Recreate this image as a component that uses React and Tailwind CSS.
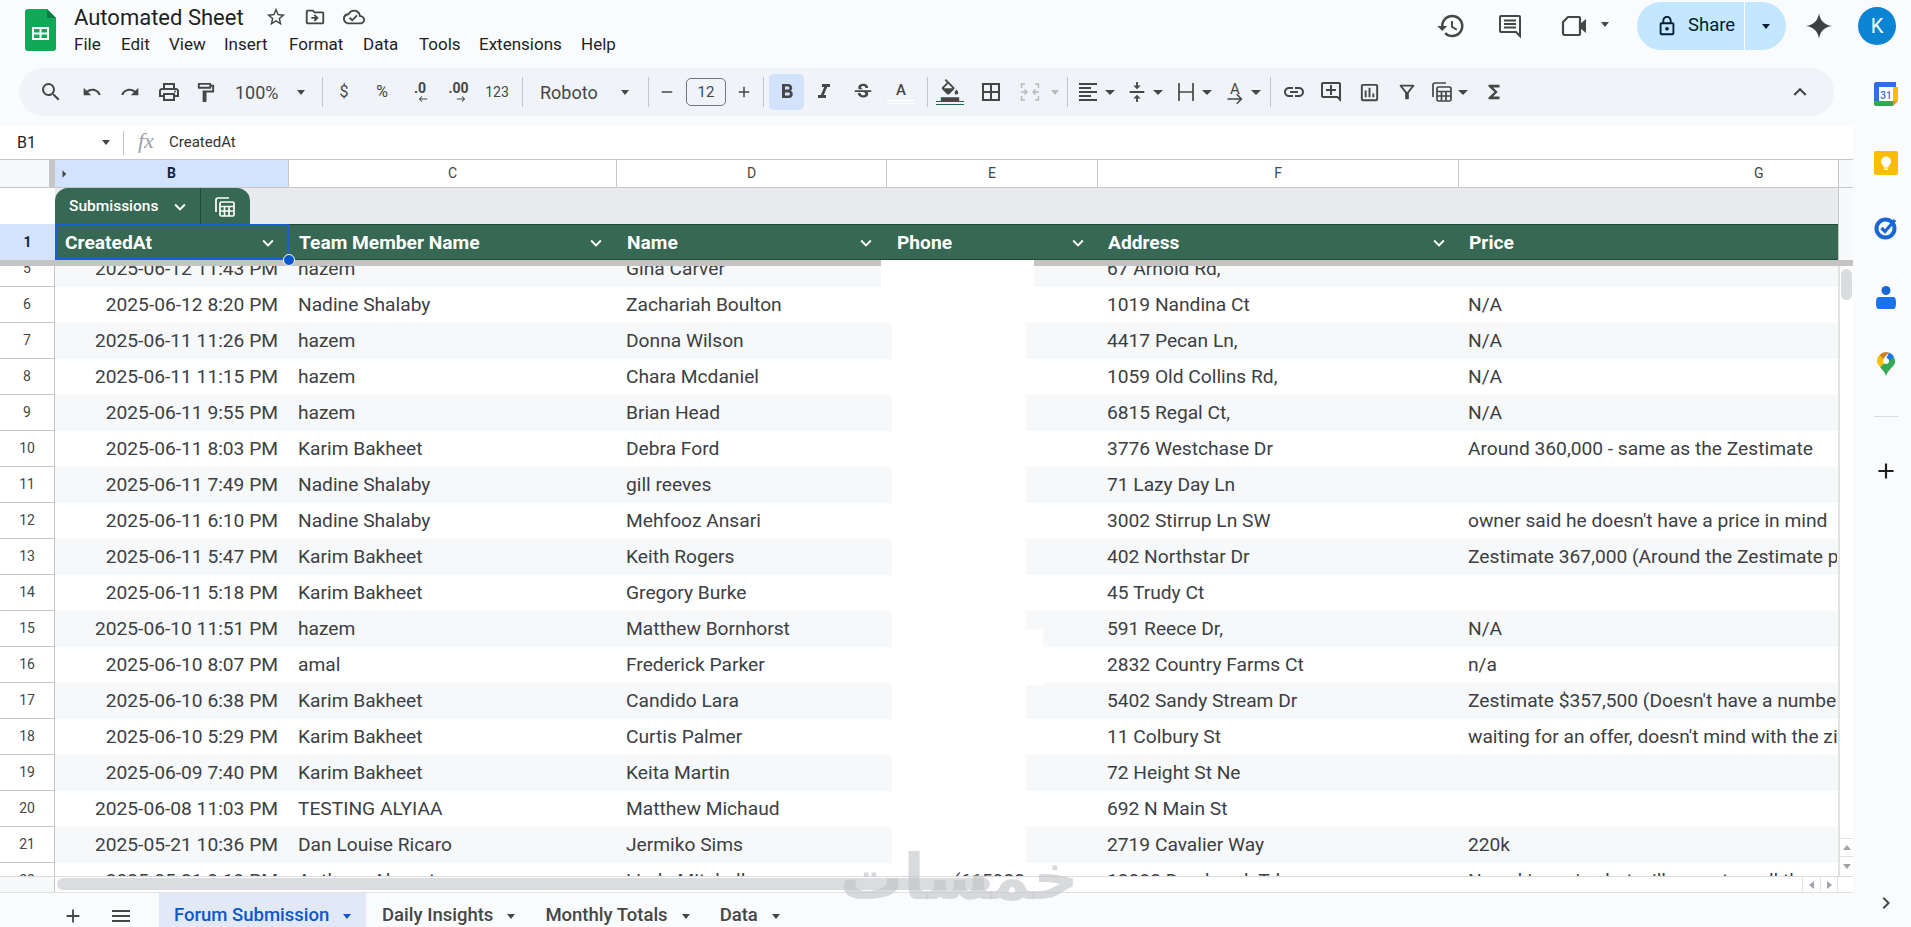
import {
  MdSearch, MdUndo, MdRedo, MdOutlinePrint, MdOutlineFormatPaint, MdRemove, MdAdd, MdFormatBold, MdFormatItalic,
  MdStrikethroughS, MdOutlineFormatColorFill, MdBorderAll, MdFormatAlignLeft, MdVerticalAlignCenter, MdInsertLink,
  MdOutlineAddComment, MdOutlineInsertChart, MdOutlineFilterAlt, MdFunctions, MdExpandLess, MdExpandMore, MdMenu,
  MdChevronRight, MdHistory, MdOutlineLock, MdStarBorder, MdOutlineDriveFileMove, MdOutlineCloudDone,
  MdArrowRight, MdWest, MdEast,
} from "react-icons/md";

const rows = [
  ["5", "2025-06-12 11:43 PM", "hazem", "Gina Carver", "", "67 Arnold Rd,", ""],
  ["6", "2025-06-12 8:20 PM", "Nadine Shalaby", "Zachariah Boulton", "", "1019 Nandina Ct", "N/A"],
  ["7", "2025-06-11 11:26 PM", "hazem", "Donna Wilson", "", "4417 Pecan Ln,", "N/A"],
  ["8", "2025-06-11 11:15 PM", "hazem", "Chara Mcdaniel", "", "1059 Old Collins Rd,", "N/A"],
  ["9", "2025-06-11 9:55 PM", "hazem", "Brian Head", "", "6815 Regal Ct,", "N/A"],
  ["10", "2025-06-11 8:03 PM", "Karim Bakheet", "Debra Ford", "", "3776 Westchase Dr", "Around 360,000 - same as the Zestimate"],
  ["11", "2025-06-11 7:49 PM", "Nadine Shalaby", "gill reeves", "", "71 Lazy Day Ln", ""],
  ["12", "2025-06-11 6:10 PM", "Nadine Shalaby", "Mehfooz Ansari", "", "3002 Stirrup Ln SW", "owner said he doesn't have a price in mind"],
  ["13", "2025-06-11 5:47 PM", "Karim Bakheet", "Keith Rogers", "", "402 Northstar Dr", "Zestimate 367,000 (Around the Zestimate price)"],
  ["14", "2025-06-11 5:18 PM", "Karim Bakheet", "Gregory Burke", "", "45 Trudy Ct", ""],
  ["15", "2025-06-10 11:51 PM", "hazem", "Matthew Bornhorst", "", "591 Reece Dr,", "N/A"],
  ["16", "2025-06-10 8:07 PM", "amal", "Frederick Parker", "", "2832 Country Farms Ct", "n/a"],
  ["17", "2025-06-10 6:38 PM", "Karim Bakheet", "Candido Lara", "", "5402 Sandy Stream Dr", "Zestimate $357,500 (Doesn't have a number in mind)"],
  ["18", "2025-06-10 5:29 PM", "Karim Bakheet", "Curtis Palmer", "", "11 Colbury St", "waiting for an offer, doesn't mind with the zip code"],
  ["19", "2025-06-09 7:40 PM", "Karim Bakheet", "Keita Martin", "", "72 Height St Ne", ""],
  ["20", "2025-06-08 11:03 PM", "TESTING ALYIAA", "Matthew Michaud", "", "692 N Main St", ""],
  ["21", "2025-05-21 10:36 PM", "Dan Louise Ricaro", "Jermiko Sims", "", "2719 Cavalier Way", "220k"],
  ["22", "2025-05-21 9:19 PM", "Anthony Almonte", "Linda Mitchell", "(665922", "12882 Deerbrook Trl", "No asking price but will accept a call tho"],
];

const Sep = ({ className = "" }) => <div className={"w-px h-[30px] bg-[#c7c7c7] shrink-0 " + className} />;

const Cell = ({ className = "", children }) => (
  <div className={"h-[36px] flex items-center justify-center shrink-0 text-[#444746] " + className}>{children}</div>
);

const Caret = ({ className = "" }) => (
  <div className={"w-[12px] flex justify-center shrink-0 " + className}>
    <div className="w-0 h-0 border-x-[5px] border-x-transparent border-t-[5px] border-t-[#444746]" />
  </div>
);

const DropCaret = ({ color = "border-t-[#444746]" }) => (
  <div className={"w-0 h-0 border-x-[4px] border-x-transparent border-t-[5px] " + color} />
);

const SheetsLogo = () => (
  <svg width="31" height="42" viewBox="0 0 31 42">
    <path d="M3 0h19l9 9v30a3 3 0 0 1-3 3H3a3 3 0 0 1-3-3V3a3 3 0 0 1 3-3z" fill="#0fa958" />
    <path d="M22 0l9 9h-9z" fill="#0b7d42" />
    <path d="M7 18h17v13H7z" fill="#fff" />
    <path d="M9 20h5.500v3.500H9zM16.500 20H22v3.500h-5.500zM9 25.500h5.500V29H9zM16.500 25.500H22V29h-5.500z" fill="#0fa958" />
  </svg>
);

const CalcIcon = ({ color = "#444746", size = 22 }) => (
  <svg width={size} height={size} viewBox="0 0 22 22" fill="none" stroke={color} strokeWidth="1.700">
    <path d="M2 16V4a2 2 0 0 1 2-2h11" />
    <rect x="6" y="6" width="14" height="14" rx="1.500" />
    <path d="M6 10.500h14M10.500 10.500V20M15 10.500V20M6 15h14" />
  </svg>
);

const CommentIcon = () => (
  <svg width="26" height="26" viewBox="0 0 26 26" fill="none" stroke="#444746" strokeWidth="2">
    <path d="M4 3h18a1 1 0 0 1 1 1v19l-4-4H4a1 1 0 0 1-1-1V4a1 1 0 0 1 1-1z" />
    <path d="M7 7.500h12M7 11h12M7 14.500h12" />
  </svg>
);

const MeetIcon = () => (
  <svg width="26" height="24" viewBox="0 0 26 24" fill="none">
    <path d="M7 3h11a1 1 0 0 1 1 1v16a1 1 0 0 1-1 1H4a2 2 0 0 1-2-2V8z" stroke="#444746" strokeWidth="2.200" strokeLinejoin="round" />
    <path d="M19 10l6-5v14l-6-5z" fill="#444746" />
  </svg>
);

const MergeIcon = () => (
  <svg width="20" height="20" viewBox="0 0 20 20" fill="none" stroke="#b8bbbb" strokeWidth="1.500">
    <path d="M5 2H1.500v4M1.500 14v4H5M15 2h3.500v4M18.500 14v4H15M1 10h6M4.500 7.500 7 10l-2.500 2.500M19 10h-6M15.500 7.500 13 10l2.500 2.500" />
  </svg>
);

const WrapIcon = () => (
  <svg width="18" height="20" viewBox="0 0 18 20" fill="none" stroke="#444746" strokeWidth="1.700">
    <path d="M2 1v18M16 1v18M2 10h14" />
  </svg>
);

const Gemini = () => (
  <svg width="26" height="26" viewBox="0 0 26 26">
    <path d="M13 0c.8 7 5 12 13 13-8 1-12.200 6-13 13-.8-7-5-12-13-13 8-1 12.200-6 13-13z" fill="#3c4043" />
  </svg>
);

const CalendarApp = () => (
  <svg width="24" height="24" viewBox="0 0 24 24">
    <path d="M0 2a2 2 0 0 1 2-2h20v5H5v14H0z" fill="#2f6fe4" />
    <path d="M19 5h5v14h-5z" fill="#fbbc04" />
    <path d="M0 19h19v5H2a2 2 0 0 1-2-2z" fill="#34a853" />
    <path d="M19 19h5l-5 5z" fill="#ea8c3a" />
    <rect x="5" y="5" width="14" height="14" fill="#fff" />
    <text x="12" y="16.500" fontSize="10" fontFamily="Roboto, sans-serif" fontWeight="500" fill="#2f6fe4" textAnchor="middle">31</text>
  </svg>
);

const KeepApp = () => (
  <svg width="24" height="24" viewBox="0 0 24 24">
    <rect width="24" height="24" rx="2" fill="#fbbc04" />
    <circle cx="12" cy="10.500" r="5" fill="#fff" />
    <rect x="9.500" y="14.500" width="5" height="2" fill="#fff" />
    <rect x="10" y="17.500" width="4" height="1.500" fill="#fff" />
  </svg>
);

const TasksApp = () => (
  <svg width="24" height="24" viewBox="0 0 24 24" fill="none">
    <circle cx="11.500" cy="12.500" r="9" stroke="#1967d2" strokeWidth="4" />
    <path d="M7.500 12l3.500 3.500L21 4" stroke="#1967d2" strokeWidth="3.200" />
  </svg>
);

const ContactsApp = () => (
  <svg width="24" height="26" viewBox="0 0 24 26">
    <circle cx="12" cy="5.500" r="4.500" fill="#1967d2" />
    <path d="M5 12h14c2 0 3 1.500 3 6s-1 6-3 6H5c-2 0-3-1.500-3-6s1-6 3-6z" fill="#1a73e8" />
  </svg>
);

const MapsApp = () => (
  <svg width="18" height="24" viewBox="0 0 18 24">
    <path d="M9 24C8 20 5 17.500 3 15L9 9l9 0c0 2-1 4-3 6-2 2.500-5 5-6 9z" fill="#34a853" />
    <path d="M3 15C1 12.500 0 11 0 9c0-2.500 1-4.500 2.600-6L9 9z" fill="#fbbc04" />
    <path d="M2.600 3A9 9 0 0 1 9 0c1 0 2 .2 3 .6L6 7z" fill="#c9812f" />
    <path d="M12 .6A9 9 0 0 1 17 5l-5 5-3-3z" fill="#1a73e8" />
    <path d="M17 5c.7 1.200 1 2.600 1 4 0 2-1 4-3 6L8 12z" fill="#34a853" />
    <circle cx="9" cy="9" r="3" fill="#fff" />
  </svg>
);

const Toolbar = () => (
  <div className="h-[48px] ml-[19px] w-[1815px] rounded-full bg-[#f0f4f9] flex items-center pl-[13px] pr-[19px]">
    <Cell className="w-[38px]"><MdSearch size={24} /></Cell>
    <Cell className="w-[44px]"><MdUndo size={20} /></Cell>
    <Cell className="w-[32px]"><MdRedo size={20} /></Cell>
    <Cell className="w-[46px]"><MdOutlinePrint size={24} /></Cell>
    <Cell className="w-[26px]"><MdOutlineFormatPaint size={23} /></Cell>
    <div className="w-[94px] shrink-0 flex items-center justify-between pl-[17px] pr-[7px] text-[18px] text-[#444746]">100%<DropCaret /></div>
    <Sep className="mx-[10px]" />
    <Cell className="w-[22px] text-[16px]">$</Cell>
    <Cell className="w-[54px] text-[16px]">%</Cell>
    <Cell className="w-[22px] relative font-bold text-[14px] pb-[7px]">.0<MdWest size={10} className="absolute bottom-[6px] left-[9px]" /></Cell>
    <Cell className="w-[55px] relative font-bold text-[14px] pb-[7px]">.00<MdEast size={10} className="absolute bottom-[6px] left-[25px]" /></Cell>
    <Cell className="w-[22px] text-[14px]">123</Cell>
    <Sep className="mx-[14px]" />
    <div className="w-[97px] shrink-0 flex items-center justify-between pl-[3px] pr-[5px] text-[18px] text-[#444746]">Roboto<DropCaret /></div>
    <Sep className="ml-[14px] mr-[9px]" />
    <Cell className="w-[18px]"><MdRemove size={20} /></Cell>
    <div className="ml-[10px] w-[40px] h-[28px] rounded-[5px] border border-[#747775] flex items-center justify-center text-[15px] text-[#444746]">12</div>
    <Cell className="w-[18px] ml-[9px]"><MdAdd size={22} /></Cell>
    <Sep className="ml-[10px]" />
    <Cell className="w-[35px] ml-[5px] rounded-[5px] bg-[#d3e3fd] text-[#0b1f3f]"><MdFormatBold size={24} /></Cell>
    <Cell className="w-[40px]"><MdFormatItalic size={24} /></Cell>
    <Cell className="w-[38px]"><MdStrikethroughS size={22} /></Cell>
    <Cell className="w-[38px] flex-col">
      <span className="text-[15px] leading-[20px] font-medium">A</span>
      <div className="w-[28px] h-[4px] border-y border-white" />
    </Cell>
    <Sep className="ml-[7px]" />
    <Cell className="w-[44px] flex-col">
      <MdOutlineFormatColorFill size={22} />
      <div className="w-[28px] h-[4px] border-y border-[#1c6a4c]" />
    </Cell>
    <Cell className="w-[37px]"><MdBorderAll size={24} /></Cell>
    <Cell className="w-[42px]"><MergeIcon /></Cell>
    <div className="w-[8px] flex justify-center"><DropCaret color="border-t-[#b8bbbb]" /></div>
    <Sep className="ml-[8px]" />
    <Cell className="w-[30px] ml-[5px]"><MdFormatAlignLeft size={24} /></Cell>
    <Caret className="ml-px" />
    <Cell className="w-[30px] ml-[6px]"><MdVerticalAlignCenter size={22} /></Cell>
    <Caret />
    <Cell className="w-[30px] ml-[7px]"><WrapIcon /></Cell>
    <Caret />
    <Cell className="w-[30px] ml-[7px] relative text-[15px] pb-[6px]">A<MdEast size={18} className="absolute bottom-[2px] left-[6px]" /></Cell>
    <Caret />
    <Sep className="ml-[8px]" />
    <Cell className="w-[30px] ml-[8px]"><MdInsertLink size={24} /></Cell>
    <Cell className="w-[30px] ml-[7px]"><MdOutlineAddComment size={24} /></Cell>
    <Cell className="w-[30px] ml-[8px]"><MdOutlineInsertChart size={23} /></Cell>
    <Cell className="w-[30px] ml-[8px]"><MdOutlineFilterAlt size={22} /></Cell>
    <Cell className="w-[30px] ml-[5px]"><CalcIcon /></Cell>
    <Caret />
    <Cell className="w-[30px] ml-[10px]"><MdFunctions size={22} /></Cell>
    <Cell className="w-[30px] ml-auto"><MdExpandLess size={26} /></Cell>
  </div>
);

const Header = () => (
  <div className="h-[68px] flex">
    <div className="ml-[25px] mt-[9px]"><SheetsLogo /></div>
    <div className="ml-[18px] mt-[2px]">
      <div className="flex items-center h-[30px] text-[#1f1f1f]">
        <span className="text-[22px]">Automated Sheet</span>
        <MdStarBorder size={22} className="ml-[21px] text-[#444746]" />
        <MdOutlineDriveFileMove size={22} className="ml-[17px] text-[#444746]" />
        <MdOutlineCloudDone size={22} className="ml-[17px] text-[#444746]" />
      </div>
      <div className="flex -mt-px text-[17px] text-[#1f1f1f] leading-[26px]">
        <span className="w-[47px]">File</span>
        <span className="w-[48px]">Edit</span>
        <span className="w-[55px]">View</span>
        <span className="w-[65px]">Insert</span>
        <span className="w-[74px]">Format</span>
        <span className="w-[56px]">Data</span>
        <span className="w-[60px]">Tools</span>
        <span className="w-[102px]">Extensions</span>
        <span>Help</span>
      </div>
    </div>
    <div className="ml-auto flex items-start pr-[15px] text-[#444746]">
      <MdHistory size={30} className="mt-[11px]" />
      <div className="ml-[31px] mt-[13px]"><CommentIcon /></div>
      <div className="ml-[38px] mt-[14px]"><MeetIcon /></div>
      <div className="ml-[14px] mt-[22px]"><DropCaret /></div>
      <div className="ml-[28px] mt-[2px] w-[149px] h-[48px] rounded-full bg-[#c2e7ff] flex items-center text-[#001d35]">
        <div className="w-[108px] h-full flex items-center border-r border-white pl-[19px]">
          <MdOutlineLock size={22} />
          <span className="ml-[10px] text-[18.5px]">Share</span>
        </div>
        <div className="flex-1 flex justify-center"><DropCaret color="border-t-[#001d35]" /></div>
      </div>
      <div className="ml-[20px] mt-[13px]"><Gemini /></div>
      <div className="ml-[26px] mt-[7px] w-[38px] h-[38px] rounded-full bg-[#0b84d4] text-white flex items-center justify-center text-[20px]">K</div>
    </div>
  </div>
);

const FormulaBar = () => (
  <div className="mt-[10px] h-[33px] bg-white flex items-center">
    <span className="ml-[17px] w-[85px] text-[16px] text-[#1f1f1f]">B1</span>
    <DropCaret />
    <div className="ml-[13px] w-px h-[24px] bg-[#c7c7c7]" />
    <span className="ml-[14px] w-[30px] pb-[3px] text-[22px] leading-[28px] italic text-[#9aa0a6] font-['Liberation_Serif',serif]">fx</span>
    <span className="ml-px text-[15px] text-[#333]">CreatedAt</span>
  </div>
);

const ColumnHeaders = () => (
  <div className="h-[29px] flex border-y border-[#c4c7c5] text-[14px] text-[#444746]">
    <div className="w-[55px] bg-[#f8f9fa] flex justify-end shrink-0">
      <div className="w-[6px] bg-[#c4c7c5]" />
    </div>
    <div className="w-[233px] bg-[#d3e3fd] font-bold text-[#0b1f3f] flex items-center justify-center relative">
      <MdArrowRight size={18} className="absolute left-0 text-[#444746]" />
      B
    </div>
    <div className="w-[328px] bg-white flex items-center justify-center border-l border-[#c4c7c5]">C</div>
    <div className="w-[270px] bg-white flex items-center justify-center border-l border-[#c4c7c5]">D</div>
    <div className="w-[211px] bg-white flex items-center justify-center border-l border-[#c4c7c5]">E</div>
    <div className="w-[361px] bg-white flex items-center justify-center border-l border-[#c4c7c5]">F</div>
    <div className="w-[380px] bg-white flex items-center pl-[295px] border-l border-[#c4c7c5]">G</div>
    <div className="flex-1 bg-[#f8f9fa] border-l border-[#c4c7c5]" />
  </div>
);

const TableTabRow = () => (
  <div className="h-[36px] flex">
    <div className="w-[55px] bg-white shrink-0" />
    <div className="w-[1783px] bg-[#e8eaed] flex">
      <div className="w-[195px] rounded-t-[13px] bg-[#366853] text-white flex items-center">
        <span className="ml-[14px] pt-[2px] text-[15.5px] font-medium">Submissions</span>
        <MdExpandMore size={22} className="ml-[11px] mt-[2px]" />
        <div className="ml-[9px] w-px h-full bg-[#21493a]" />
        <div className="ml-[13px] mt-[2px]"><CalcIcon color="#fff" /></div>
      </div>
    </div>
    <div className="flex-1 bg-[#f8f9fa] border-l border-[#c4c7c5]" />
  </div>
);

const headCls = "flex items-center justify-between bg-[#366853] text-white text-[19.2px] font-bold pt-[2px] ";
const headEdge = "pl-[10px] border-y border-[#1f4a38] ";

const HeaderRow = () => (
  <div className="h-[36px] flex relative">
    <div className="w-[55px] bg-[#d3e3fd] flex items-center justify-center text-[14px] font-bold text-[#0b1f3f] shrink-0">1</div>
    <div className={headCls + "w-[234px] pl-[8px] pr-[8px] border-2 border-[#1a5fd8]"}>CreatedAt<MdExpandMore size={22} /></div>
    <div className={headCls + headEdge + "w-[328px] pr-[10px]"}>Team Member Name<MdExpandMore size={22} /></div>
    <div className={headCls + headEdge + "w-[270px] pr-[10px]"}>Name<MdExpandMore size={22} /></div>
    <div className={headCls + headEdge + "w-[211px] pr-[9px]"}>Phone<MdExpandMore size={22} /></div>
    <div className={headCls + headEdge + "w-[361px] pr-[9px]"}>Address<MdExpandMore size={22} /></div>
    <div className={headCls + headEdge + "w-[379px]"}>Price</div>
    <div className="flex-1 bg-[#f8f9fa] border-l border-[#c4c7c5]" />
    <div className="absolute left-[283px] top-[30px] w-[12px] h-[12px] rounded-full bg-[#0b57d0] border border-white z-10" />
  </div>
);

const DataRows = () => (
  <div className="h-[610px] overflow-hidden flex relative">
    <div className="w-[1838px] -mt-[15px] shrink-0">
      {rows.map((r, i) => (
        <div key={r[0]} className={"h-[36px] flex text-[19.2px] text-[#3c4043] " + (i % 2 === 0 ? "bg-[#f6f8f9]" : "bg-white")}>
          <div className="w-[55px] bg-white border-r border-b border-[#c4c7c5] flex items-center justify-center text-[14px] text-[#444746] shrink-0">{r[0]}</div>
          <div className="w-[234px] flex items-center justify-end pt-[1px] pr-[10px] shrink-0 -ml-px">{r[1]}</div>
          <div className="w-[328px] flex items-center pt-[1px] pl-[10px] shrink-0">{r[2]}</div>
          <div className="w-[270px] flex items-center pt-[1px] pl-[10px] shrink-0">{r[3]}</div>
          <div className="w-[211px] flex items-center justify-end pt-[1px] pr-[72px] shrink-0">{r[4]}</div>
          <div className="w-[361px] flex items-center pt-[1px] pl-[10px] shrink-0">{r[5]}</div>
          <div className="w-[379px] flex items-center pt-[1px] pl-[10px] shrink-0 overflow-hidden whitespace-nowrap">{r[6]}</div>
        </div>
      ))}
    </div>
    <div className="flex-1 bg-white border-l-2 border-[#e1e3e1] flex flex-col items-center">
      <div className="w-[11px] h-[31px] mt-[3px] rounded-full bg-[#dadce0]" />
      <div className="mt-auto h-[38px] w-full flex flex-col text-[#9aa0a6]">
        <div className="h-[19px] border-y border-[#e1e3e1] flex items-center justify-center"><div className="w-0 h-0 border-x-[4px] border-x-transparent border-b-[5px] border-b-[#a0a4a8]" /></div>
        <div className="h-[19px] flex items-center justify-center"><DropCaret color="border-t-[#a0a4a8]" /></div>
      </div>
    </div>
    {/* redacted phone numbers */}
    <div className="absolute left-[892px] top-0 w-[134px] h-[597px] bg-white" />
    <div className="absolute left-[1026px] top-[363px] w-[17px] h-[56px] bg-white" />
  </div>
);

const HScroll = () => (
  <div className="h-[16px] flex bg-white border-t border-[#dadce0]">
    <div className="w-[55px] bg-[#f8f9fa] border-r border-[#c4c7c5]" />
    <div className="w-[1747px] pt-[1px] pl-[2px]">
      <div className="w-[933px] h-[12px] rounded-full bg-[#dadce0]" />
    </div>
    <div className="w-[18px] border-l border-[#e1e3e1] flex items-center justify-center">
      <div className="w-0 h-0 border-y-[4px] border-y-transparent border-r-[5px] border-r-[#a0a4a8]" />
    </div>
    <div className="w-[18px] border-x border-[#e1e3e1] flex items-center justify-center">
      <div className="w-0 h-0 border-y-[4px] border-y-transparent border-l-[5px] border-l-[#a0a4a8]" />
    </div>
  </div>
);

const SheetTabs = () => (
  <div className="h-[35px] flex items-stretch border-t border-[#e1e3e1] text-[#444746]">
    <div className="flex items-center pt-[12px]">
      <MdAdd size={22} className="ml-[62px]" />
      <MdMenu size={24} className="ml-[25px]" />
    </div>
    <div className="ml-[26px] w-[207px] bg-[#e1e9f7] flex items-center pt-[12px] pl-[15px] text-[#0b57d0] text-[18.5px] font-medium">
      Forum Submission
      <div className="ml-[14px]"><DropCaret color="border-t-[#0b57d0]" /></div>
    </div>
    <div className="flex items-center pt-[12px] text-[18.5px] font-medium">
      <span className="ml-[16px]">Daily Insights</span>
      <div className="ml-[14px]"><DropCaret /></div>
      <span className="ml-[30px]">Monthly Totals</span>
      <div className="ml-[14px]"><DropCaret /></div>
      <span className="ml-[30px]">Data</span>
      <div className="ml-[14px]"><DropCaret /></div>
    </div>
  </div>
);

const SidePanel = () => (
  <div className="w-[58px] flex flex-col items-center pt-[14px] pl-[8px] shrink-0">
    <CalendarApp />
    <div className="mt-[45px]"><KeepApp /></div>
    <div className="mt-[41px]"><TasksApp /></div>
    <div className="mt-[45px]"><ContactsApp /></div>
    <div className="mt-[41px]"><MapsApp /></div>
    <div className="mt-[40px] w-[24px] h-px bg-[#dadce0]" />
    <MdAdd size={26} className="mt-[41px] text-[#1f1f1f]" />
    <MdChevronRight size={24} className="mt-auto mb-[12px] text-[#444746]" />
  </div>
);

export default function App() {
  return (
    <div className="w-[1911px] h-[927px] bg-[#f9fbfd] overflow-hidden relative font-['Roboto',sans-serif]">
      <Header />
      <div className="flex h-[859px]">
        <div className="w-[1853px] shrink-0 flex flex-col">
          <Toolbar />
          <FormulaBar />
          <ColumnHeaders />
          <TableTabRow />
          <HeaderRow />
          <div className="h-[6px] bg-[#c4c4c4]" />
          <DataRows />
          <HScroll />
          <SheetTabs />
        </div>
        <SidePanel />
      </div>
      {/* redacted phone number over the frozen row edge */}
      <div className="absolute left-[881px] top-[260px] w-[153px] h-[27px] bg-white" />
      {/* site watermark */}
      <div className="absolute left-[840px] top-[838px] text-[63px] leading-[80px] font-bold text-[#bfc1c4]/60 pointer-events-none font-['DejaVu_Sans',sans-serif]">خمسات</div>
    </div>
  );
}
